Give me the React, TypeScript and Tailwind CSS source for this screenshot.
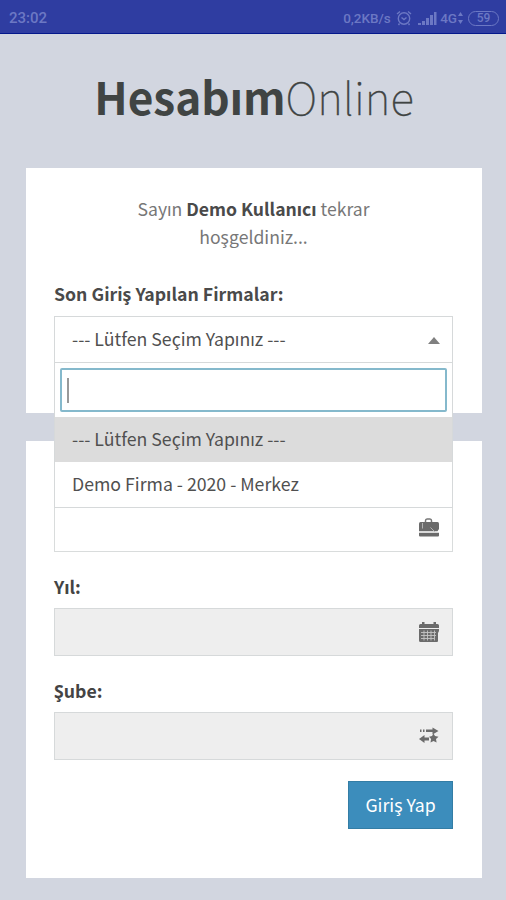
import React from 'react';

const BriefcaseIcon = () => (
  <svg width="22" height="20" viewBox="0 0 22 20" fill="#6b6b6b">
    <path d="M7.500 5V2.800Q7.500 1 9 1h3q1.500 0 1.500 1.800V5" fill="none" stroke="#777" strokeWidth="1.500" />
    <path d="M2.500 4h17Q21 4 21 5.500v5.500l-1.500 2.200H1V5.500Q1 4 2.500 4z" />
    <path d="M1 14.800h20v2.700q0 1-1 1H2q-1 0-1-1z" />
    <path d="M4.500 5v5.500M12.500 9.500l4.500 4.500" stroke="#bbb" strokeWidth="0.900" />
  </svg>
);

const CalendarIcon = () => (
  <svg width="22" height="22" viewBox="0 0 22 22" fill="#6b6b6b">
    <path d="M1 7V4.500q0-1.500 1.500-1.500H4V1h2.500v2h9V1H18v2h1.500Q21 3 21 4.500V7z" />
    <path d="M1 8h20v2l-1 2v8q0 1-1 1H2.500Q1 21 1 19.500z" />
    <path d="M3 11.500h15M3 14.500h15M3 17.500h13M6 9.500v10M9.500 9.500v10M13 9.500v10M16.500 9.500v10" stroke="#c4c4c4" strokeWidth="0.900" />
  </svg>
);

const BranchIcon = () => (
  <svg width="22" height="18" viewBox="0 0 22 18" fill="#6b6b6b">
    <path d="M2 2.500h1.500V5H2zM5 2.500h1.500V5H5zM8 2.500h6.500V.5L20.500 4l-6 3.500V5H8z" />
    <path d="M1 12l5.500-4v2.500H11v3H6.500V16z" />
    <path d="M15.500 6.500l1.500 2.500 3.500.7-2.500 2.300.6 3.600-3.100-1.600-3 1.600.6-3.600L11 9.700l3-.7z" />
  </svg>
);

const StatusBar = () => (
  <header className="flex h-[34px] items-center justify-between border-b border-[#04188c] bg-[#2f3da1] pt-[3px] pr-[7px] pl-[9px] font-[Roboto,sans-serif] text-[#6c78c4]">
    <span className="text-[15px] font-medium">23:02</span>
    <div className="flex items-center text-[13.5px] font-medium">
      <span className="w-[50px] whitespace-nowrap">0,2KB/s</span>
      <svg className="ml-[3px]" width="16" height="16" viewBox="0 0 16 16" fill="none" stroke="currentColor" strokeWidth="1.400">
        <circle cx="8" cy="8.500" r="5.700" />
        <path d="M1 4l3-2.500M15 4l-3-2.500M5.500 7.500L8 9.500l2.500-2M3.500 13.500L2.500 15M12.500 13.500l1 1.500" />
      </svg>
      <svg className="ml-[6px]" width="19" height="13" viewBox="0 0 19 13" fill="currentColor">
        <path d="M0 11h3v2H0zM4 9h3v4H4zM8 6h3v7H8zM12 3h3v10h-3zM16 0h2.500v13H16z" />
      </svg>
      <span className="ml-[3px]">4G</span>
      <svg width="7" height="12" viewBox="0 0 7 12" fill="currentColor">
        <path d="M3.500 0L6 4H1zM3.500 12L1 8h5z" />
      </svg>
      <span className="ml-[4px] flex h-[15px] w-[31px] items-center justify-center rounded-full border-[1.5px] border-current text-[12px]">
        59
      </span>
    </div>
  </header>
);

type FieldProps = {
  label?: string;
  icon: React.ReactNode;
  disabled?: boolean;
};

const Field = ({ label, icon, disabled }: FieldProps) => (
  <div className="h-[104px]">
    <div className="h-[33px] text-[17.7px] leading-[23px] font-bold text-[#444]">{label}</div>
    <div
      className={`flex h-[48px] items-center justify-end border pr-[12px] pb-px ${
        disabled ? 'border-[#d6d9da] bg-[#eee]' : 'border-[#d9dcdc] bg-white'
      }`}
    >
      {icon}
    </div>
  </div>
);

const CompanySelect = () => (
  <div className="relative mt-[9px] text-[17.7px] text-[#505050]">
    <div className="flex h-[47px] items-center justify-between border border-[#d6d9da] bg-white pr-[12px] pl-[17px]">
      <span className="-mt-[2px]">--- Lütfen Seçim Yapınız ---</span>
      <span className="mt-[2px] border-x-[6px] border-b-[7px] border-x-transparent border-b-[#808080]" />
    </div>
    <div className="absolute inset-x-0 top-[46px] z-10 h-[146px] border border-[#d6d9da] bg-white">
      <div className="px-[5px] pt-[5px] pb-[5px]">
        <div className="flex h-[44px] items-center rounded-[2px] border-2 border-[#85b9cc] pl-[5px]">
          <span className="h-[25px] w-[2px] bg-[#999]" />
        </div>
      </div>
      <div className="flex h-[45px] items-center bg-[#dcdcdc] pb-[2px] pl-[17px]">--- Lütfen Seçim Yapınız ---</div>
      <div className="flex h-[45px] items-center pb-[2px] pl-[17px]">Demo Firma - 2020 - Merkez</div>
    </div>
  </div>
);

const App = () => {
  return (
    <div className="h-[900px] w-[506px] overflow-hidden bg-[#d2d6e0] font-['Noto_Sans_CJK_JP','Noto_Sans',sans-serif]">
      <StatusBar />
      <h1 className="flex h-[134px] items-center justify-center pb-[9px] pl-[2px] text-[44.2px] whitespace-nowrap text-[#404443]">
        <span className="font-bold">Hesabım</span>
        <span className="font-thin [-webkit-text-stroke:0.3px]">Online</span>
      </h1>
      <main className="pr-[24px] pl-[26px]">
        <section className="h-[245px] bg-white pt-[27px] pr-[29px] pl-[28px]">
          <p className="text-center text-[17.6px] leading-[28px] text-[#777]">
            Sayın <b className="text-[#4a4a4a]">Demo Kullanıcı</b> tekrar
            <br />
            hoşgeldiniz...
          </p>
          <p className="mt-[30px] pb-px text-[17.7px] leading-[25px] font-bold text-[#4a4a4a]">Son Giriş Yapılan Firmalar:</p>
          <CompanySelect />
        </section>
        <section className="mt-[28px] h-[437px] bg-white pt-[30px] pr-[29px] pl-[28px]">
          <Field icon={<BriefcaseIcon />} />
          <Field label="Yıl:" icon={<CalendarIcon />} disabled />
          <Field label="Şube:" icon={<BranchIcon />} disabled />
          <button className="-mt-[2px] ml-auto block h-[48px] w-[105px] border border-[#337da5] bg-[#3c8dbc] pb-px text-[17.7px] text-white">
            Giriş Yap
          </button>
        </section>
      </main>
    </div>
  );
};

export default App;
